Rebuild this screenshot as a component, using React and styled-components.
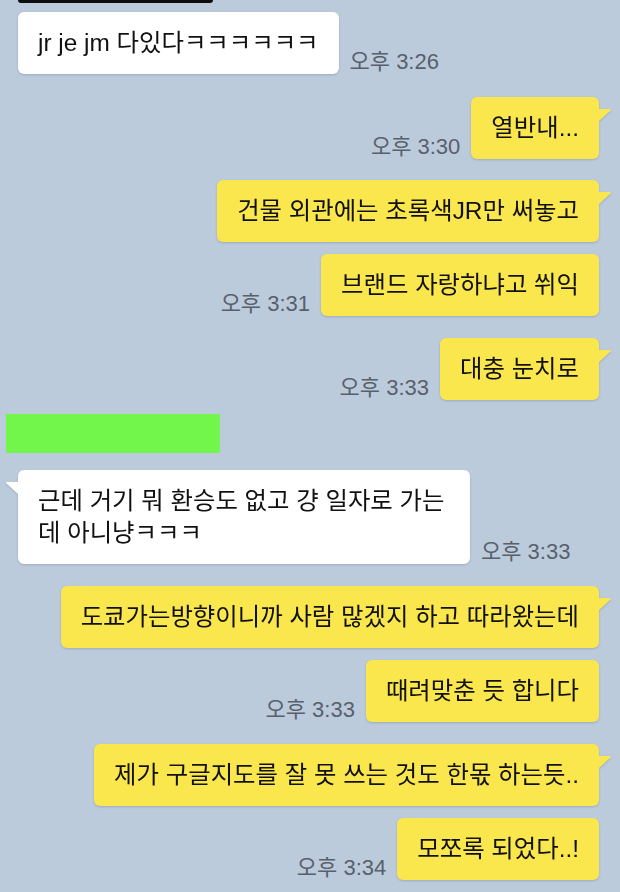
import React from 'react';
import styled, { createGlobalStyle, css } from 'styled-components';

const GlobalStyle = createGlobalStyle`
	html, body {
		margin: 0;
		padding: 0;
		background: #bccbdc;
	}
`

const Page = styled.div`
	width: 620px;
	height: 892px;
	overflow: hidden;
	box-sizing: border-box;
	background: #bccbdc;
	padding: 0 21px 0 18px;
	font-family: "Liberation Sans", "Noto Sans CJK KR", sans-serif;
	color: #111;
`

const CutBubble = styled.div`
	width: 195px;
	height: 3px;
	background: #0d0d0d;
	border-radius: 0 0 4px 4px;
`

const NameTag = styled.div`
	width: 214px;
	height: 39px;
	margin: 14px 0 0 -12px;
	background: #72f64b;
`

const Row = styled.div`
	display: flex;
	align-items: flex-end;
	gap: 11px;
	justify-content: ${props => props.mine ? 'flex-end' : 'flex-start'};
	margin-top: ${props => props.gap}px;
`

const tailRight = css`
	&::after {
		content: '';
		position: absolute;
		top: 12px;
		right: -12px;
		width: 13px;
		height: 13px;
		background: inherit;
		clip-path: polygon(0 0, 92% 0, 100% 8%, 0 100%);
	}
`

const tailLeft = css`
	&::after {
		content: '';
		position: absolute;
		top: 12px;
		left: -12px;
		width: 13px;
		height: 13px;
		background: inherit;
		clip-path: polygon(8% 0, 100% 0, 100% 100%, 0 8%);
	}
`

const Bubble = styled.div`
	position: relative;
	box-sizing: border-box;
	max-width: ${props => props.mine ? 'none' : '452px'};
	padding: 15px 20px;
	border-radius: 6px;
	background: ${props => props.mine ? '#fae64d' : '#ffffff'};
	font-size: 24.4px;
	line-height: 32px;
	word-break: break-all;
	filter: drop-shadow(0 1px 1px rgba(40, 60, 90, 0.22));
	${props => props.tail && (props.mine ? tailRight : tailLeft)}
`

const Time = styled.span`
	flex-shrink: 0;
	font-size: 22px;
	line-height: 24px;
	color: #58606c;
	white-space: nowrap;
`

const messages = [
	{ mine: false, text: 'jr je jm 다있다ㅋㅋㅋㅋㅋㅋ', time: '오후 3:26', gap: 9 },
	{ mine: true, tail: true, text: '열반내...', time: '오후 3:30', gap: 23 },
	{ mine: true, tail: true, text: '건물 외관에는 초록색JR만 써놓고', gap: 21 },
	{ mine: true, text: '브랜드 자랑하냐고 쒸익', time: '오후 3:31', gap: 12 },
	{ mine: true, tail: true, text: '대충 눈치로', time: '오후 3:33', gap: 22 },
	{ name: true },
	{ mine: false, tail: true, text: '근데 거기 뭐 환승도 없고 걍 일자로 가는데 아니냥ㅋㅋㅋ', time: '오후 3:33', gap: 17 },
	{ mine: true, tail: true, text: '도쿄가는방향이니까 사람 많겠지 하고 따라왔는데', gap: 22 },
	{ mine: true, text: '때려맞춘 듯 합니다', time: '오후 3:33', gap: 12 },
	{ mine: true, tail: true, text: '제가 구글지도를 잘 못 쓰는 것도 한몫 하는듯..', gap: 22 },
	{ mine: true, text: '모쪼록 되었다..!', time: '오후 3:34', gap: 12 },
]

export default function App() {
	return (
		<Page>
			<GlobalStyle />
			<CutBubble />
			{messages.map((msg, i) => {
				if (msg.name) return <NameTag key={i} />;
				const time = msg.time && <Time>{msg.time}</Time>;
				return (
					<Row key={i} mine={msg.mine} gap={msg.gap}>
						{msg.mine && time}
						<Bubble mine={msg.mine} tail={msg.tail}>{msg.text}</Bubble>
						{!msg.mine && time}
					</Row>
				)
			})}
		</Page>
	)
}
